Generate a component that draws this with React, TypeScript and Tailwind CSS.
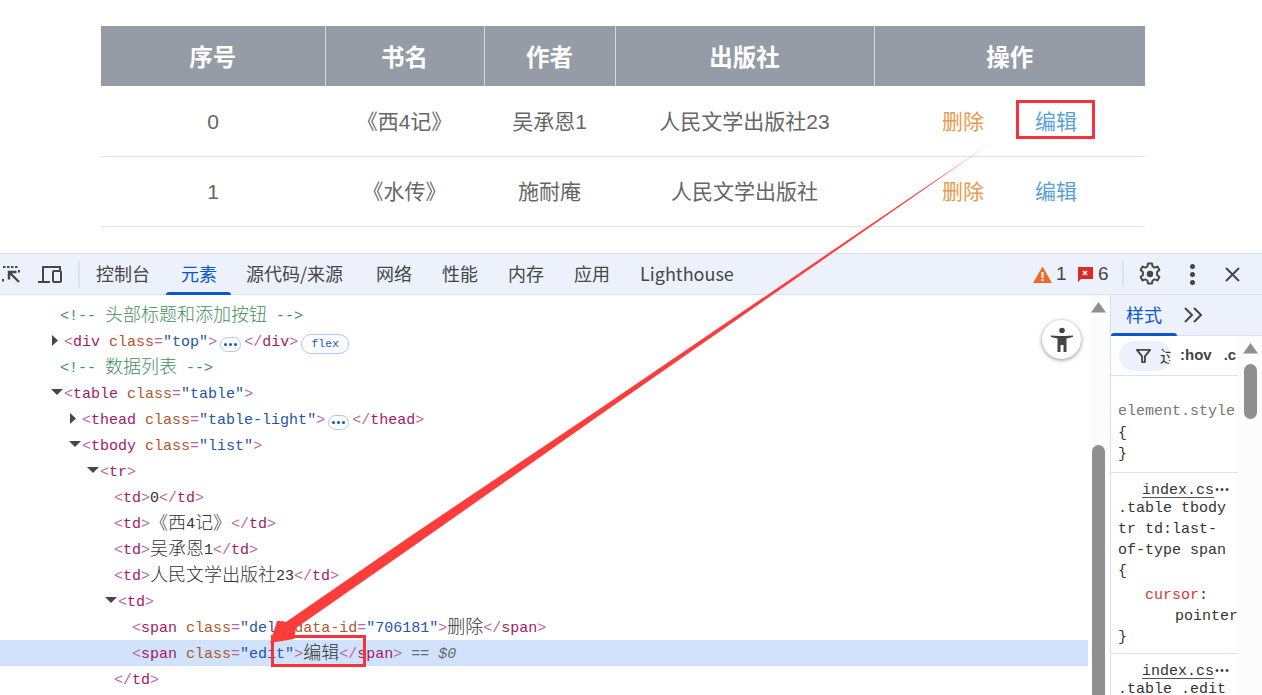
import React from "react";

const cjk = '"Liberation Sans","Noto Sans CJK SC",sans-serif';

function Z({ children }: { children: React.ReactNode }) {
  return <span className="text-[18px] leading-[0] align-[-1px] font-['Noto_Sans_CJK_SC',sans-serif] font-light">{children}</span>;
}
function B({ children }: { children: React.ReactNode }) {
  return <span className="text-[#b8699c]">{children}</span>;
}
function N({ children }: { children: React.ReactNode }) {
  return <span className="text-[#a31a63]">{children}</span>;
}
function A({ children }: { children: React.ReactNode }) {
  return <span className="text-[#b0562c]">{children}</span>;
}
function V({ children }: { children: React.ReactNode }) {
  return <span className="text-[#1f54ad]">{children}</span>;
}
function Open({ name, attr }: { name: string; attr?: React.ReactNode }) {
  return (
    <>
      <B>&lt;</B>
      <N>{name}</N>
      {attr}
      <B>&gt;</B>
    </>
  );
}
function Close({ name }: { name: string }) {
  return (
    <>
      <B>&lt;/</B>
      <N>{name}</N>
      <B>&gt;</B>
    </>
  );
}
function Attr({ n, v }: { n: string; v: string }) {
  return (
    <>
      {" "}
      <A>{n}</A>
      <B>=</B>
      <V>"{v}"</V>
    </>
  );
}
function Tri({ open }: { open: boolean }) {
  return (
    <span className="inline-block w-[13px] h-[11px]">
      <svg width="12" height="11" viewBox="0 0 12 11" fill="#474747" className="block">
        {open ? <path d="M0 2h12L6 8z" /> : <path d="M1 0v11L7 5.500z" />}
      </svg>
    </span>
  );
}
function Dots() {
  return (
    <span className="inline-flex ml-[3px] mr-[3px] w-[21px] h-[15px] rounded-[8px] border border-[#a8c7fa] items-center justify-center gap-[2px] align-[0px]">
      <span className="w-[3px] h-[3px] rounded-full bg-[#0b57d0]" />
      <span className="w-[3px] h-[3px] rounded-full bg-[#0b57d0]" />
      <span className="w-[3px] h-[3px] rounded-full bg-[#0b57d0]" />
    </span>
  );
}
function Tree({ className, children }: { className: string; children: React.ReactNode }) {
  return <div className={"h-[26px] leading-[30px] whitespace-pre " + className}>{children}</div>;
}
function Source() {
  return (
    <div className="pl-[24px] h-[18px] pt-[3px] leading-[15px]">
      <span className="border-b border-[#555555] inline-block h-[15px] leading-[15px]">index.cs</span>
      <span className="text-[10px] tracking-[-1px] align-[1px]">•••</span>
    </div>
  );
}

const columns = ["w-[224px]", "w-[159px]", "w-[131px]", "w-[259px]", "w-[271px]"];
const heads = ["序号", "书名", "作者", "出版社", "操作"];
const rows = [
  ["0", "《西4记》", "吴承恩1", "人民文学出版社23"],
  ["1", "《水传》", "施耐庵", "人民文学出版社"],
];
const tabs = [
  { t: "控制台", c: "pl-[15px] pr-[16px] text-[#474747]" },
  { t: "元素", c: "pl-[15px] pr-[14px] text-[#0b57d0]" },
  { t: "源代码/来源", c: "pl-[15px] pr-[18px] text-[#474747]" },
  { t: "网络", c: "px-[15px] text-[#474747]" },
  { t: "性能", c: "px-[15px] text-[#474747]" },
  { t: "内存", c: "px-[15px] text-[#474747]" },
  { t: "应用", c: "px-[15px] text-[#474747]" },
  { t: "Lighthouse", c: "px-[15px] text-[#474747]" },
];

export default function App() {
  return (
    <div className="relative w-[1262px] h-[695px] overflow-hidden bg-white flex flex-col" style={{ fontFamily: cjk }}>
      <div className="h-[253px] shrink-0 pt-[26px] pl-[101px]">
        <table className="table-fixed w-[1044px] border-collapse">
          <colgroup>
            {columns.map((c) => (
              <col key={c} className={c} />
            ))}
          </colgroup>
          <thead>
            <tr className="bg-[#959ca6] h-[60px]">
              {heads.map((h, i) => (
                <th key={h} className={"text-white text-[23.5px] font-bold text-center p-0 pt-[5px] " + (i < 4 ? "border-r border-[#d5d8dc]" : "")}>
                  {h}
                </th>
              ))}
            </tr>
          </thead>
          <tbody>
            {rows.map((r) => (
              <tr key={r[0]} className="h-[70px] border-b border-[#e3e1ea] text-[#666666] text-[21px]">
                {r.map((c) => (
                  <td key={c} className="text-center p-0 pt-[2px]">
                    {c}
                  </td>
                ))}
                <td className="p-0 pt-[2px]">
                  <div className="flex justify-center gap-[51px]">
                    <span className="text-[#e79a4e]">删除</span>
                    <span className="text-[#5c9fd6]">编辑</span>
                  </div>
                </td>
              </tr>
            ))}
          </tbody>
        </table>
      </div>

      <div className="flex-1 flex flex-col min-h-0 border-t border-[#d3e3fd]">
        <div className="h-[41px] shrink-0 bg-[#ecf1fb] border-b border-[#d3e3fd] flex items-center text-[#474747]">
          <div className="w-[78px] flex items-center shrink-0 relative h-full">
            <svg className="absolute left-[2px] top-[11px]" width="18" height="18" viewBox="0 0 18 18" fill="none" stroke="#474747" strokeWidth="2">
              <path d="M2 2h.5M6 2h.5M10 2h.5M14 2h.5M17 6v.5M1 15v.5" strokeLinecap="square" />
              <path d="M17 17 8 8M7 14.500V7h7.500" strokeWidth="2.400" />
            </svg>
            <svg className="absolute left-[38px] top-[11px]" width="25" height="19" viewBox="0 0 25 19" fill="none" stroke="#474747" strokeWidth="2">
              <path d="M0 17h12M5 17V2h17v3" />
              <rect x="15" y="6" width="8" height="11" rx="1" />
            </svg>
          </div>
          <div className="w-[2px] h-[26px] bg-[#d3e3fd] shrink-0" />
          <div className="flex items-center h-full pl-[1px]">
            {tabs.map(({ t, c }) => (
              <div key={t} className={"relative h-full flex items-center pb-[2px] text-[18px] font-['Noto_Sans_CJK_SC',sans-serif] " + c}>
                {t}
                {t === "元素" && <span className="absolute left-0 right-0 bottom-[-1px] h-[3px] rounded-t-[3px] bg-[#0b57d0]" />}
              </div>
            ))}
          </div>
          <div className="flex-1" />
          <div className="flex items-center h-full text-[19px] pr-[22px]">
            <svg width="19" height="17" viewBox="0 0 19 17" className="mr-[4px]">
              <path d="M9.500 0.500 19 17H0z" fill="#ef6a26" />
              <path d="M8.500 6h2v6h-2zM8.500 13h2v2h-2z" fill="#fff" />
            </svg>
            <span className="w-[21px]">1</span>
            <svg width="16" height="17" viewBox="0 0 16 17" className="mr-[5px]">
              <path d="M1 1h15v12H4l-3 3z" fill="#dc2a2a" />
              <path d="M6 5l4 4M10 5l-4 4" stroke="#fff" strokeWidth="1.500" />
            </svg>
            <span className="w-[24px]">6</span>
            <div className="w-[2px] h-[26px] bg-[#d3e3fd]" />
            <svg width="24" height="24" viewBox="0 0 24 24" className="ml-[14px] mr-[28px]" fill="none" stroke="#474747" strokeWidth="2">
              <path d="M10 1.500h4l.6 3 1.900 1.100 2.900-1 2 3.500-2.300 2v2.800l2.300 2-2 3.500-2.900-1-1.900 1.100-.6 3h-4l-.6-3-1.900-1.100-2.900 1-2-3.500 2.300-2v-2.800l-2.300-2 2-3.500 2.900 1 1.900-1.100z" strokeLinejoin="round" />
              <circle cx="12" cy="12" r="3.200" fill="#474747" stroke="none" />
            </svg>
            <div className="flex flex-col gap-[3px] w-[5px] mr-[30px]">
              <span className="w-[5px] h-[5px] rounded-full bg-[#474747]" />
              <span className="w-[5px] h-[5px] rounded-full bg-[#474747]" />
              <span className="w-[5px] h-[5px] rounded-full bg-[#474747]" />
            </div>
            <svg width="15" height="15" viewBox="0 0 15 15" stroke="#474747" strokeWidth="2">
              <path d="M1 1l13 13M14 1 1 14" />
            </svg>
          </div>
        </div>

        <div className="flex-1 flex min-h-0">
          <div className="w-[1090px] shrink-0 pt-[7px] text-[15px] text-[#333333] overflow-hidden font-['Liberation_Mono',monospace]">
            <Tree className="pl-[60px] text-[#3f8f5c]">&lt;!-- <Z>头部标题和添加按钮</Z> --&gt;</Tree>
            <Tree className="pl-[51px]">
              <Tri open={false} />
              <Open name="div" attr={<Attr n="class" v="top" />} />
              <Dots />
              <Close name="div" />
              <span className="inline-flex ml-[3px] w-[48px] h-[20px] rounded-[10px] border border-[#a8c7fa] items-center justify-center text-[11.500px] leading-[20px] text-[#0b57d0] align-[-1px]">flex</span>
            </Tree>
            <Tree className="pl-[60px] text-[#3f8f5c]">&lt;!-- <Z>数据列表</Z> --&gt;</Tree>
            <Tree className="pl-[51px]">
              <Tri open />
              <Open name="table" attr={<Attr n="class" v="table" />} />
            </Tree>
            <Tree className="pl-[69px]">
              <Tri open={false} />
              <Open name="thead" attr={<Attr n="class" v="table-light" />} />
              <Dots />
              <Close name="thead" />
            </Tree>
            <Tree className="pl-[69px]">
              <Tri open />
              <Open name="tbody" attr={<Attr n="class" v="list" />} />
            </Tree>
            <Tree className="pl-[87px]">
              <Tri open />
              <Open name="tr" />
            </Tree>
            <Tree className="pl-[114px]">
              <Open name="td" />0<Close name="td" />
            </Tree>
            <Tree className="pl-[114px]">
              <Open name="td" />
              <Z>《西</Z>4<Z>记》</Z>
              <Close name="td" />
            </Tree>
            <Tree className="pl-[114px]">
              <Open name="td" />
              <Z>吴承恩</Z>1
              <Close name="td" />
            </Tree>
            <Tree className="pl-[114px]">
              <Open name="td" />
              <Z>人民文学出版社</Z>23
              <Close name="td" />
            </Tree>
            <Tree className="pl-[105px]">
              <Tri open />
              <Open name="td" />
            </Tree>
            <Tree className="pl-[132px]">
              <Open name="span" attr={<><Attr n="class" v="del" /><Attr n="data-id" v="706181" /></>} />
              <Z>删除</Z>
              <Close name="span" />
            </Tree>
            <Tree className="pl-[132px] bg-[#d1e2fc] w-[1088px]">
              <Open name="span" attr={<Attr n="class" v="edit" />} />
              <Z>编辑</Z>
              <Close name="span" />
              <span className="text-[#6b6b6b] italic">{" == $0"}</span>
            </Tree>
            <Tree className="pl-[114px]">
              <Close name="td" />
            </Tree>
          </div>

          <div className="w-[21px] shrink-0 bg-[#fcfcfc] border-r border-[#d3e3fd] flex flex-col items-center">
            <svg width="15" height="11" viewBox="0 0 15 11" className="mt-[7px] mr-[3px]" fill="#8f8f8f">
              <path d="M7.500 0 15 10.500H0z" />
            </svg>
            <div className="mt-[132px] w-[13px] flex-1 rounded-t-[7px] bg-[#8f8f8f] mr-[3px]" />
          </div>

          <div className="flex-1 min-w-0 flex flex-col font-['Liberation_Mono',monospace]">
            <div className="h-[41px] shrink-0 bg-[#ecf1fb] border-b border-[#d3e3fd] flex items-center relative">
              <span className="w-[66px] pb-[2px] text-center text-[18px] text-[#0b57d0] font-['Noto_Sans_CJK_SC',sans-serif]">样式</span>
              <svg width="18" height="16" viewBox="0 0 18 16" className="ml-[7px]" fill="none" stroke="#474747" strokeWidth="2">
                <path d="M1 1l7 7-7 7M10 1l7 7-7 7" />
              </svg>
              <span className="absolute left-0 w-[66px] bottom-[-1px] h-[3px] rounded-t-[3px] bg-[#0b57d0]" />
            </div>
            <div className="flex-1 flex min-h-0">
              <div className="w-[127px] shrink-0 flex flex-col min-w-0 overflow-hidden">
                <div className="h-[40px] shrink-0 border-b border-[#d3e3fd] flex items-center pl-[8px]">
                  <div className="w-[52px] h-[30px] rounded-[15px] bg-[#ecf1fb] flex items-center pl-[17px] overflow-hidden shrink-0">
                    <svg width="15" height="15" viewBox="0 0 16 16" fill="none" stroke="#474747" strokeWidth="2" className="shrink-0">
                      <path d="M1 2h14L9.500 9v6h-3V9z" strokeLinejoin="round" />
                    </svg>
                    <span className="ml-[9px] text-[17px] font-['Noto_Sans_CJK_SC',sans-serif] text-[#333333]">过</span>
                  </div>
                  <span className="ml-[9px] text-[15px] font-bold text-[#444444] font-['Liberation_Sans',sans-serif] whitespace-nowrap">:hov</span>
                  <span className="ml-[12px] text-[15px] font-bold text-[#444444] font-['Liberation_Sans',sans-serif]">.c</span>
                </div>
                <div className="h-[97px] shrink-0 border-b border-[#d3e3fd] pl-[7px] pt-[25px] text-[15px] leading-[21.500px] text-[#333333]">
                  <div className="text-[#757575] whitespace-nowrap">element.style</div>
                  <div>{"{"}</div>
                  <div>{"}"}</div>
                </div>
                <div className="h-[181px] shrink-0 border-b border-[#d3e3fd] pl-[7px] pt-[7px] text-[15px] leading-[21px] text-[#333333] whitespace-nowrap">
                  <Source />
                  <div>.table tbody</div>
                  <div>tr td:last-</div>
                  <div>of-type span</div>
                  <div>{"{"}</div>
                  <div className="pl-[27px] pt-[3px]"><span className="text-[#d93a3a]">cursor</span>:</div>
                  <div className="pl-[57px]">pointer</div>
                  <div>{"}"}</div>
                </div>
                <div className="pl-[7px] pt-[7px] text-[15px] leading-[21px] text-[#333333] whitespace-nowrap">
                  <Source />
                  <div>.table .edit</div>
                </div>
              </div>
              <div className="flex-1 bg-[#fcfcfc] flex flex-col items-center">
                <svg width="15" height="11" viewBox="0 0 15 11" className="mt-[7px]" fill="#8f8f8f">
                  <path d="M7.500 0 15 10.500H0z" />
                </svg>
                <div className="mt-[10px] w-[13px] h-[55px] rounded-[7px] bg-[#8f8f8f]" />
              </div>
            </div>
          </div>
        </div>
      </div>

      <div className="absolute left-[1042px] top-[320px] w-[39px] h-[39px] rounded-full bg-white shadow-[0_1px_4px_rgba(0,0,0,0.45)] flex items-center justify-center">
        <svg width="22" height="26" viewBox="0 0 22 26" fill="#444444">
          <circle cx="11" cy="3.500" r="2.800" />
          <path d="M0 8.500 L8 9 h6 L22 8.500 v1.600 L15.500 11.500 V25 h-3 V18 h-3 v7 h-3 V11.500 L0 10.100z" />
        </svg>
      </div>

      <div className="absolute left-[1016px] top-[100px] w-[79px] h-[39px] border-[3px] border-[#f5333a]" />
      <div className="absolute left-[271px] top-[635px] w-[95px] h-[32px] border-[3px] border-[#f5333a]" />
      <svg className="absolute left-0 top-0 pointer-events-none" width="1262" height="695">
        <defs>
          <linearGradient id="arrowFade" gradientUnits="userSpaceOnUse" x1="995" y1="140" x2="930" y2="185">
            <stop offset="0" stopColor="#ff3c3c" stopOpacity="0.25" />
            <stop offset="1" stopColor="#ff3c3c" />
          </linearGradient>
        </defs>
        <polygon
          points="995,140 900.300,206.100 765.700,299.500 601.300,414 412.550,546.800 296,628 294,639 270,643 277,621 286,622 407.450,538.200 598.700,409.600 764.300,296.900 899.700,204.700"
          fill="url(#arrowFade)"
        />
      </svg>
    </div>
  );
}
